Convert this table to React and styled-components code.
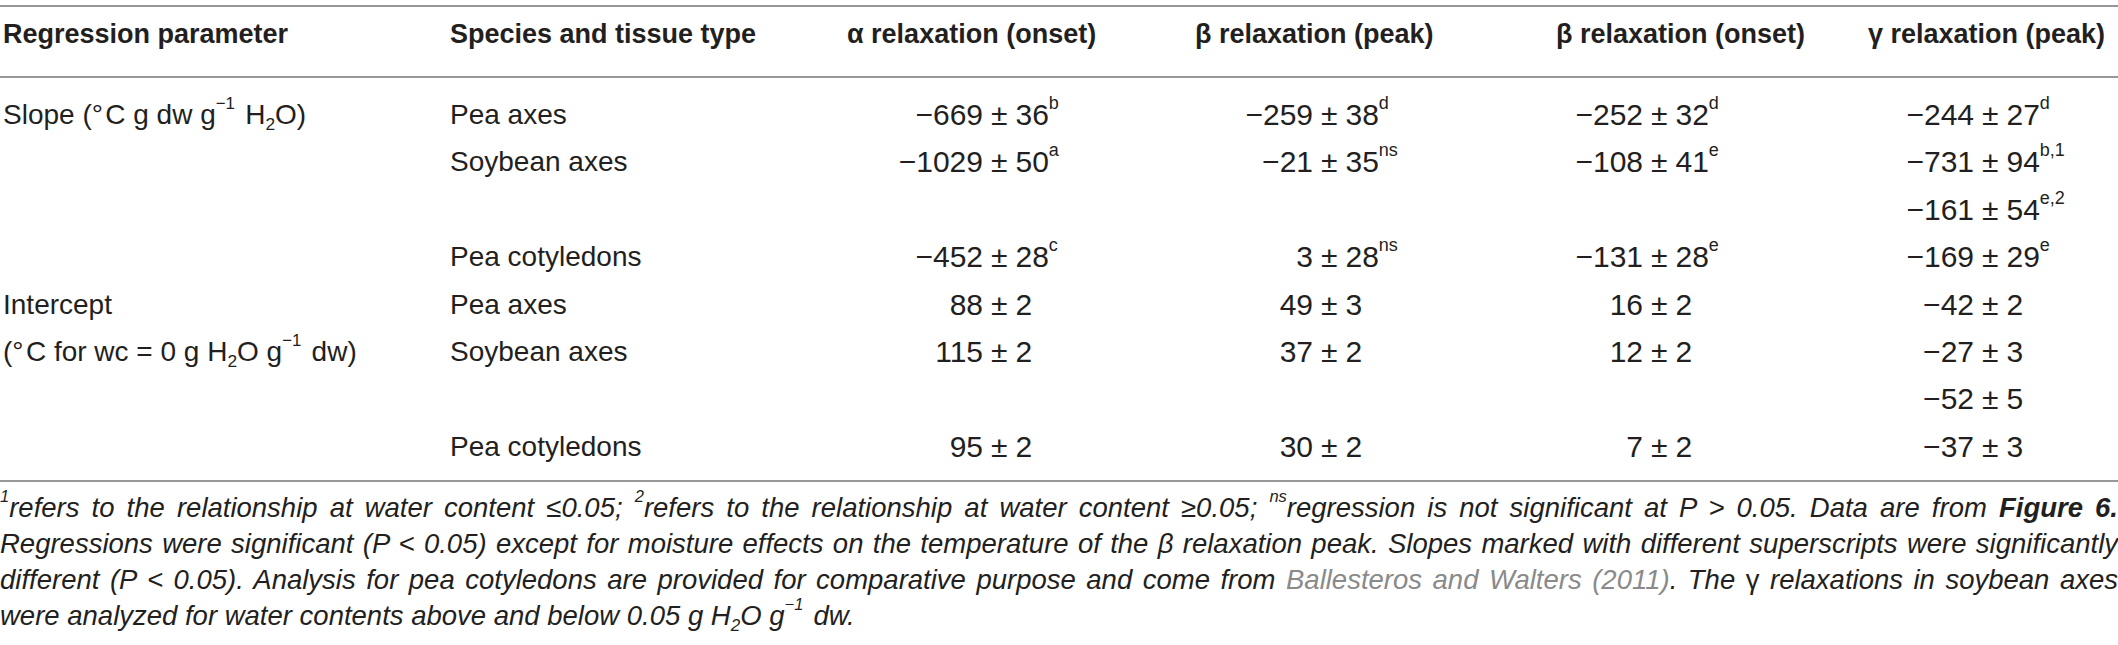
import React from "react";
import styled, { createGlobalStyle } from "styled-components";

const GlobalStyle = createGlobalStyle`
  html, body {
    margin: 0;
    padding: 0;
    background: #ffffff;
  }
  body {
    font-family: "Liberation Sans", Arial, Helvetica, sans-serif;
    color: #231f20;
  }
`;

// column tracks of the table (parameter, species, four relaxation columns)
const COLUMNS = "450px 397px 348px 361px 312px 1fr";
const RULE = "2px solid #979797";

// width of the part in front of "±" per value column, so the ± signs line up
const LEADS = [144, 126, 95, 114];

const Page = styled.div`
  width: 2118px;
  padding-top: 5px;
`;

const Table = styled.div`
  border-top: ${RULE};
  border-bottom: ${RULE};
`;

const HeadRow = styled.div`
  display: grid;
  grid-template-columns: ${COLUMNS};
  padding: 10px 0 25px;
  border-bottom: ${RULE};
`;

const HeadCell = styled.div`
  font-size: 27px;
  font-weight: 700;
  line-height: 34px;
  white-space: nowrap;
  padding-left: ${({ $first }) => ($first ? "3px" : "0")};
`;

const Body = styled.div`
  padding: 13px 0 10px;
`;

const Row = styled.div`
  display: grid;
  grid-template-columns: ${COLUMNS};
  height: 47.4px;
`;

const Label = styled.div`
  font-size: 28px;
  line-height: 47px;
  white-space: nowrap;
  padding-left: ${({ $first }) => ($first ? "3px" : "0")};
`;

const Value = styled.div`
  display: flex;
  font-size: 30px;
  line-height: 47px;
  white-space: nowrap;
`;

const Lead = styled.span`
  box-sizing: border-box;
  width: ${({ $w }) => $w}px;
  padding-right: 8px;
  text-align: right;
`;

const Tail = styled.span`
  padding-left: 8px;
`;

const Sup = styled.sup`
  font-size: 0.6em;
  line-height: 0;
  vertical-align: 0.9em;
  padding-right: ${({ $gap }) => ($gap ? "0.15em" : "0")};
`;

const Sub = styled.sub`
  font-size: 0.62em;
  line-height: 0;
  vertical-align: -0.35em;
`;

const Notes = styled.div`
  margin-top: 8px;
  font-size: 27.5px;
  font-style: italic;
  line-height: 36px;
`;

const NoteLine = styled.div`
  text-align: justify;
  text-align-last: ${({ $last }) => ($last ? "left" : "justify")};
  white-space: nowrap;
`;

const Ref = styled.span`
  color: #8a8a8a;
`;

const Strong = styled.b`
  font-weight: 700;
`;

const Upright = styled.span`
  font-style: normal;
`;

const header = [
  "Regression parameter",
  "Species and tissue type",
  "α relaxation (onset)",
  "β relaxation (peak)",
  "β relaxation (onset)",
  "γ relaxation (peak)",
];

const v = (lead, tail, sup) => ({ lead, tail, sup });

const rows = [
  {
    param: (
      <>
        Slope (°{"\u200A"}C g dw g<Sup $gap>−1</Sup> H<Sub>2</Sub>O)
      </>
    ),
    species: "Pea axes",
    values: [v("−669", "36", "b"), v("−259", "38", "d"), v("−252", "32", "d"), v("−244", "27", "d")],
  },
  {
    species: "Soybean axes",
    values: [v("−1029", "50", "a"), v("−21", "35", "ns"), v("−108", "41", "e"), v("−731", "94", "b,1")],
  },
  { values: [null, null, null, v("−161", "54", "e,2")] },
  {
    species: "Pea cotyledons",
    values: [v("−452", "28", "c"), v("3", "28", "ns"), v("−131", "28", "e"), v("−169", "29", "e")],
  },
  {
    param: "Intercept",
    species: "Pea axes",
    values: [v("88", "2"), v("49", "3"), v("16", "2"), v("−42", "2")],
  },
  {
    param: (
      <>
        (°{"\u200A"}C for wc = 0 g H<Sub>2</Sub>O g<Sup $gap>−1</Sup> dw)
      </>
    ),
    species: "Soybean axes",
    values: [v("115", "2"), v("37", "2"), v("12", "2"), v("−27", "3")],
  },
  { values: [null, null, null, v("−52", "5")] },
  {
    species: "Pea cotyledons",
    values: [v("95", "2"), v("30", "2"), v("7", "2"), v("−37", "3")],
  },
];

function Cell({ value, lead }) {
  if (!value) return <div />;
  return (
    <Value>
      <Lead $w={lead}>{value.lead}</Lead>±
      <Tail>
        {value.tail}
        {value.sup && <Sup>{value.sup}</Sup>}
      </Tail>
    </Value>
  );
}

export default function App() {
  return (
    <>
      <GlobalStyle />
      <Page>
        <Table>
          <HeadRow>
            {header.map((h, i) => (
              <HeadCell key={h} $first={i === 0}>
                {h}
              </HeadCell>
            ))}
          </HeadRow>
          <Body>
            {rows.map((r, i) => (
              <Row key={i}>
                <Label $first>{r.param}</Label>
                <Label>{r.species}</Label>
                {r.values.map((val, j) => (
                  <Cell key={j} value={val} lead={LEADS[j]} />
                ))}
              </Row>
            ))}
          </Body>
        </Table>
        <Notes>
          <NoteLine>
            <Sup>1</Sup>refers to the relationship at water content ≤0.05; <Sup>2</Sup>refers to the
            relationship at water content ≥0.05; <Sup>ns</Sup>regression is not significant at P &gt; 0.05.
            Data are from <Strong>Figure 6.</Strong>
          </NoteLine>
          <NoteLine>
            Regressions were significant (P &lt; 0.05) except for moisture effects on the temperature of
            the β relaxation peak. Slopes marked with different superscripts were significantly
          </NoteLine>
          <NoteLine>
            different (P &lt; 0.05). Analysis for pea cotyledons are provided for comparative purpose and
            come from <Ref>Ballesteros and Walters (2011)</Ref>. The <Upright>γ</Upright> relaxations in
            soybean axes
          </NoteLine>
          <NoteLine $last>
            were analyzed for water contents above and below 0.05 g H<Sub>2</Sub>O g<Sup $gap>−1</Sup> dw.
          </NoteLine>
        </Notes>
      </Page>
    </>
  );
}
